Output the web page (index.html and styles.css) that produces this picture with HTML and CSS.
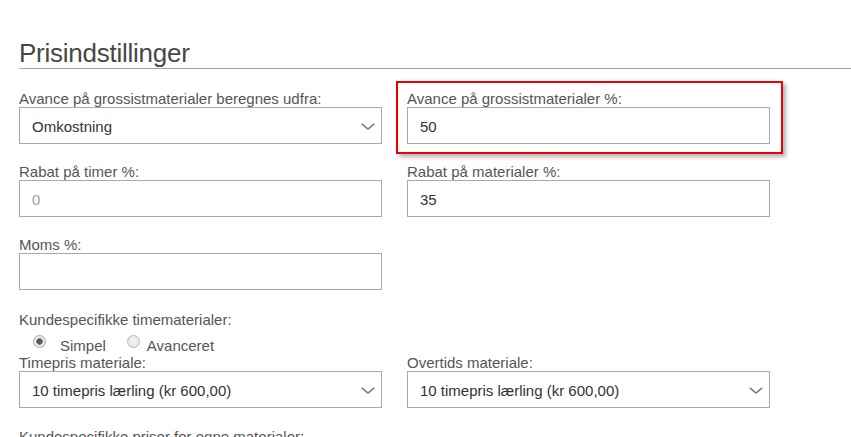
FILE: index.html
```html
<!DOCTYPE html>
<html lang="da">
<head>
<meta charset="utf-8">
<title>Prisindstillinger</title>
<link rel="stylesheet" href="styles.css">
</head>
<body>
<section class="settings">
  <h1 class="title">Prisindstillinger</h1>

  <div class="grid">
    <div class="group">
      <label class="label">Avance på grossistmaterialer beregnes udfra:</label>
      <div class="select">
        <span class="value">Omkostning</span>
        <svg class="chev" width="14" height="7" viewBox="0 0 14 7"><polyline points="0.8,0.8 7,6 13.2,0.8" fill="none" stroke="#7a7a7a" stroke-width="1.6"/></svg>
      </div>
    </div>
    <div class="group highlighted">
      <label class="label">Avance på grossistmaterialer %:</label>
      <div class="input"><span class="value">50</span></div>
      <div class="highlight"></div>
    </div>

    <div class="group">
      <label class="label">Rabat på timer %:</label>
      <div class="input"><span class="value placeholder">0</span></div>
    </div>
    <div class="group">
      <label class="label">Rabat på materialer %:</label>
      <div class="input"><span class="value">35</span></div>
    </div>

    <div class="group">
      <label class="label">Moms %:</label>
      <div class="input"></div>
    </div>
  </div>

  <div class="group radios-group">
    <label class="label">Kundespecifikke timematerialer:</label>
    <div class="radios">
      <span class="radio checked"></span><span class="radio-text">Simpel</span>
      <span class="radio second"></span><span class="radio-text second-text">Avanceret</span>
    </div>
  </div>

  <div class="grid">
    <div class="group">
      <label class="label">Timepris materiale:</label>
      <div class="select">
        <span class="value">10 timepris lærling (kr 600,00)</span>
        <svg class="chev" width="14" height="7" viewBox="0 0 14 7"><polyline points="0.8,0.8 7,6 13.2,0.8" fill="none" stroke="#7a7a7a" stroke-width="1.6"/></svg>
      </div>
    </div>
    <div class="group">
      <label class="label">Overtids materiale:</label>
      <div class="select">
        <span class="value">10 timepris lærling (kr 600,00)</span>
        <svg class="chev" width="14" height="7" viewBox="0 0 14 7"><polyline points="0.8,0.8 7,6 13.2,0.8" fill="none" stroke="#7a7a7a" stroke-width="1.6"/></svg>
      </div>
    </div>
  </div>

  <div class="group last">
    <label class="label">Kundespecifikke priser for egne materialer:</label>
  </div>
</section>
</body>
</html>
```
FILE: styles.css
```css
html, body {
  margin: 0;
  padding: 0;
  background: #ffffff;
  overflow: hidden;
}

body {
  width: 851px;
  height: 437px;
  font-family: "Liberation Sans", Arial, sans-serif;
  font-size: 15px;
  color: #555555;
}

.settings {
  padding-left: 19px;
}

.title {
  margin: 38px 0 21px 0;
  font-size: 26px;
  line-height: 30px;
  font-weight: normal;
  letter-spacing: -0.25px;
  color: #474747;
  border-bottom: 1px solid #a3a3a3;
}

.grid {
  display: grid;
  grid-template-columns: 363px 363px;
  column-gap: 25px;
  row-gap: 19px;
}

.group {
  position: relative;
}

.label {
  display: block;
  line-height: 17px;
  height: 17px;
  color: #555555;
  white-space: nowrap;
}

.input,
.select {
  box-sizing: border-box;
  height: 37px;
  border: 1px solid #a9a9a9;
  background: #ffffff;
  display: flex;
  align-items: center;
  padding: 0 6px 0 12px;
}

.select {
  justify-content: space-between;
}

.value {
  color: #333333;
  line-height: 17px;
  padding-top: 1px;
}

.value.placeholder {
  color: #a0a0a0;
}

.chev {
  display: block;
  margin-top: 1px;
}

.highlight {
  position: absolute;
  left: -11px;
  top: -9px;
  right: -13px;
  bottom: -10px;
  border: 2px solid #ee0000;
  box-shadow: 3px 3px 4px rgba(0, 0, 0, 0.3);
  pointer-events: none;
}

.radios-group {
  margin-top: 21px;
}

.radios {
  display: flex;
  align-items: center;
  height: 18px;
  margin-top: 8px;
  padding-left: 14px;
  margin-bottom: 0;
}

.radio {
  box-sizing: border-box;
  width: 13px;
  height: 13px;
  border-radius: 50%;
  border: 1px solid #b5b5b5;
  background: radial-gradient(circle at 50% 40%, #f4f4f4 0%, #e3e3e3 100%);
  margin-right: 14px;
  margin-bottom: 7px;
  flex: none;
}

.radio.checked {
  background: radial-gradient(circle, #5a5a5a 0, #5a5a5a 2.4px, #7a7a7a 3px, #ececec 3.6px, #e6e6e6 100%);
  border-color: #a8a8a8;
}

.radio.second {
  margin-left: 21px;
  margin-right: 7px;
}

.radio-text {
  line-height: 17px;
  color: #555555;
}

.grid + .group.radios-group + .grid {
  margin-top: 0;
}

.last {
  margin-top: 20px;
}
```
